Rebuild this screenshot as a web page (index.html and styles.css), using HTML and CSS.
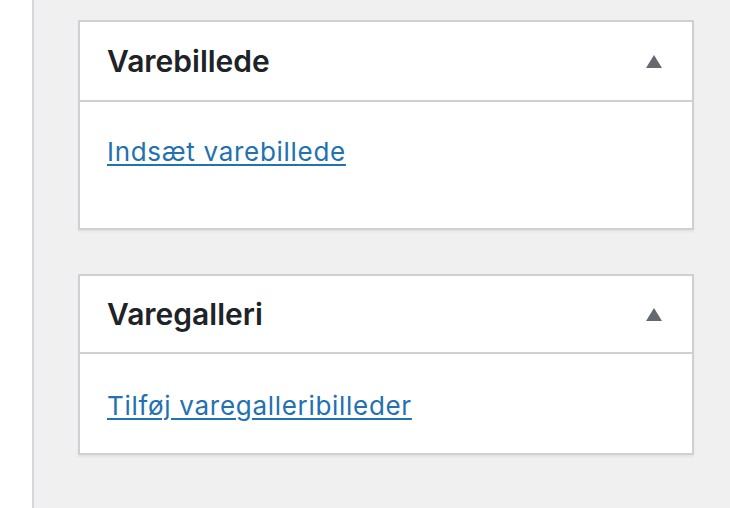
FILE: index.html
```html
<!DOCTYPE html>
<html lang="da">
<head>
<meta charset="utf-8">
<title>Varebillede</title>
<link rel="stylesheet" href="styles.css">
</head>
<body>
<div class="page">
  <div class="gutter"></div>
  <div class="main">
    <div class="postbox">
      <div class="postbox-header">
        <h2 class="postbox-title">Varebillede</h2>
        <span class="toggle" aria-hidden="true"></span>
      </div>
      <div class="postbox-inside inside-image">
        <a href="#" class="link">Indsæt varebillede</a>
      </div>
    </div>
    <div class="postbox">
      <div class="postbox-header header-short">
        <h2 class="postbox-title">Varegalleri</h2>
        <span class="toggle" aria-hidden="true"></span>
      </div>
      <div class="postbox-inside inside-gallery">
        <a href="#" class="link">Tilføj varegalleribilleder</a>
      </div>
    </div>
  </div>
</div>
</body>
</html>
```
FILE: styles.css
```css
html, body {
  margin: 0;
  padding: 0;
  height: 100%;
  background: #ffffff;
  font-family: Inter, "Noto Sans", sans-serif;
}

.page {
  display: flex;
  height: 508px;
  overflow: hidden;
}

.gutter {
  width: 32px;
  flex: none;
  background: #ffffff;
  border-right: 2px solid #d4d6d9;
}

.main {
  flex: 1;
  background: #f0f0f1;
  padding: 20px 36px 0 44px;
  display: flex;
  flex-direction: column;
  gap: 44px;
}

.postbox {
  background: #ffffff;
  border: 2px solid #cdd0d4;
  box-shadow: 0 2px 2px rgba(0, 0, 0, 0.05);
}

.postbox-header {
  height: 78px;
  display: flex;
  align-items: center;
  justify-content: space-between;
  padding: 0 30px 0 27px;
  border-bottom: 2px solid #cdd0d4;
}

.header-short {
  height: 76px;
}

.postbox-title {
  margin: 0;
  font-size: 30px;
  font-weight: 600;
  color: #1d2327;
  line-height: 36px;
  letter-spacing: 0;
}

.toggle {
  width: 0;
  height: 0;
  border-left: 8.5px solid transparent;
  border-right: 8.5px solid transparent;
  border-bottom: 13px solid #646970;
  margin-top: 1px;
}

.postbox-inside {
  padding: 32px 27px 0 27px;
  box-sizing: border-box;
}

.inside-image {
  height: 126px;
}

.inside-gallery {
  height: 99px;
  padding-top: 34px;
}

.link {
  font-size: 26px;
  line-height: 36px;
  letter-spacing: 0.7px;
  color: #2271b1;
  text-decoration: underline;
  text-underline-offset: 3px;
  text-decoration-thickness: 2px;
}
```
